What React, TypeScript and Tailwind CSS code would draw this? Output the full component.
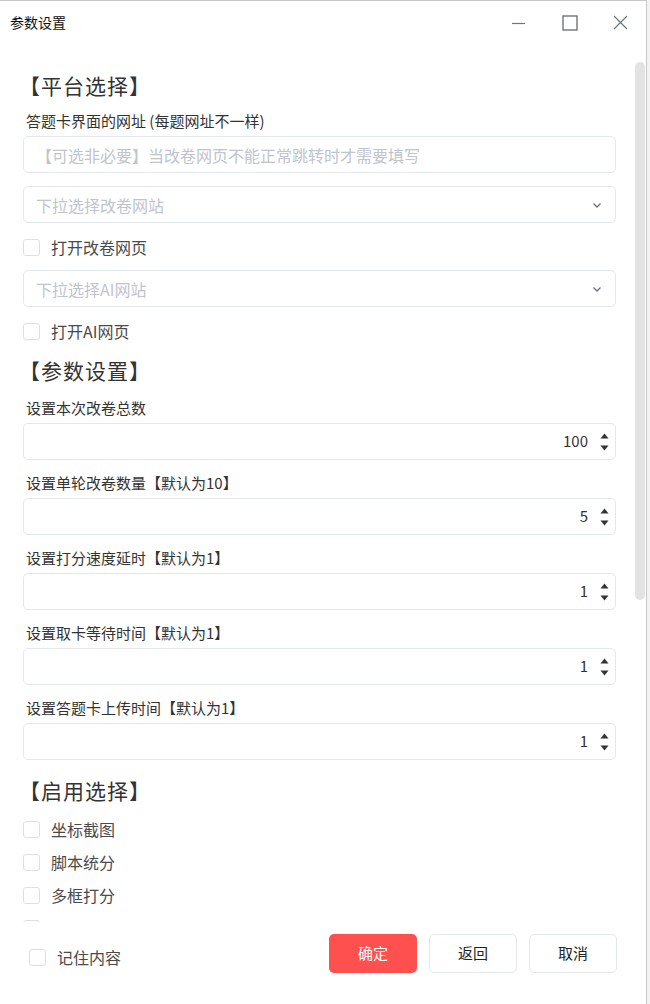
import React from 'react';

const FONT = '"Noto Sans CJK SC", "Noto Sans", sans-serif';

const Checkbox: React.FC<{ label?: string; className?: string }> = ({ label, className = '' }) => (
  <label className={`flex items-center h-[20px] shrink-0 ${className}`}>
    <span className="w-[17px] h-[17px] rounded-[3px] border border-[#dcdfe6] bg-white shrink-0"></span>
    {label && <span className="ml-[11px] text-[16px] text-[#4a4a4a] leading-[20px]">{label}</span>}
  </label>
);

const SectionTitle: React.FC<{ text: string; className?: string }> = ({ text, className = '' }) => (
  <div className={`-ml-[4px] shrink-0 text-[21px] tracking-[1px] leading-[28px] text-[#333] ${className}`}>{text}</div>
);

const FieldLabel: React.FC<{ text: string; className?: string }> = ({ text, className = '' }) => (
  <div className={`ml-[3px] shrink-0 text-[15px] leading-[20px] text-[#333] ${className}`}>{text}</div>
);

const Chevron = () => (
  <svg width="12" height="12" viewBox="0 0 12 12" fill="none" stroke="#6b6f76" strokeWidth="1.3">
    <path d="M2.5 4.5 L6 8 L9.5 4.5" />
  </svg>
);

const Select: React.FC<{ placeholder: string; className?: string }> = ({ placeholder, className = '' }) => (
  <div className={`h-[37px] shrink-0 rounded-[5px] border border-[#e4e7ed] bg-white flex items-center pl-[12px] pr-[12px] ${className}`}>
    <span className="flex-1 text-[16px] text-[#c0c4cc]">{placeholder}</span>
    <Chevron />
  </div>
);

const NumberInput: React.FC<{ value: number; className?: string }> = ({ value, className = '' }) => (
  <div className={`h-[37px] shrink-0 rounded-[5px] border border-[#e4e7ed] bg-white flex items-center pr-[5px] ${className}`}>
    <span className="flex-1 text-right text-[15px] text-[#333] pr-[10px]">{value}</span>
    <div className="flex flex-col items-center gap-[6px] w-[12px]">
      <svg width="9" height="6" viewBox="0 0 9 6"><path d="M0.5 5.5 L4.5 0.5 L8.5 5.5 Z" fill="#333" /></svg>
      <svg width="9" height="6" viewBox="0 0 9 6"><path d="M0.5 0.5 L4.5 5.5 L8.5 0.5 Z" fill="#333" /></svg>
    </div>
  </div>
);

const numberFields = [
  { label: '设置本次改卷总数', value: 100 },
  { label: '设置单轮改卷数量【默认为10】', value: 5 },
  { label: '设置打分速度延时【默认为1】', value: 1 },
  { label: '设置取卡等待时间【默认为1】', value: 1 },
  { label: '设置答题卡上传时间【默认为1】', value: 1 },
];

const enableOptions = ['坐标截图', '脚本统分', '多框打分'];

export default function App() {
  return (
    <div className="w-[650px] h-[1004px] bg-[#f3f3f3] overflow-hidden" style={{ fontFamily: FONT }}>
      <div className="w-[647px] h-[1004px] bg-white border-t border-r border-[#c8c8c8] flex flex-col">
        {/* title bar */}
        <div className="h-[43px] flex items-center shrink-0">
          <span className="ml-[10px] text-[14px] text-[#111] flex-1">参数设置</span>
          <div className="flex items-center">
            <svg width="14" height="14" viewBox="0 0 14 14" className="mr-[36px]">
              <path d="M0 7.5 H13" stroke="#6e7480" strokeWidth="1.2" />
            </svg>
            <svg width="16" height="16" viewBox="0 0 16 16" className="mr-[35px]">
              <rect x="1" y="1" width="14" height="14" fill="none" stroke="#6e7480" strokeWidth="1.4" />
            </svg>
            <svg width="15" height="15" viewBox="0 0 15 15" className="mr-[18px]">
              <path d="M1 1 L14 14 M14 1 L1 14" stroke="#6e7480" strokeWidth="1.2" />
            </svg>
          </div>
        </div>

        {/* scroll area */}
        <div className="flex-1 flex overflow-hidden">
          <div className="flex-1 pl-[23px] pr-[19px] flex flex-col overflow-hidden">
            <SectionTitle text="【平台选择】" className="mt-[27px]" />
            <FieldLabel text="答题卡界面的网址 (每题网址不一样)" className="mt-[12px]" />
            <div className="mt-[5px] h-[37px] shrink-0 rounded-[5px] border border-[#e4e7ed] bg-white flex items-center pl-[12px]">
              <span className="text-[16px] text-[#c0c4cc]">【可选非必要】当改卷网页不能正常跳转时才需要填写</span>
            </div>
            <Select placeholder="下拉选择改卷网站" className="mt-[13px]" />
            <Checkbox label="打开改卷网页" className="mt-[14px]" />
            <Select placeholder="下拉选择AI网站" className="mt-[13px]" />
            <Checkbox label="打开AI网页" className="mt-[14px]" />

            <SectionTitle text="【参数设置】" className="mt-[15px]" />
            {numberFields.map((f, i) => (
              <div key={i} className="flex flex-col shrink-0">
                <FieldLabel text={f.label} className={i === 0 ? 'mt-[14px]' : 'mt-[13px]'} />
                <NumberInput value={f.value} className="mt-[5px]" />
              </div>
            ))}

            <SectionTitle text="【启用选择】" className="mt-[16px]" />
            <div className="flex flex-col shrink-0 gap-[13px] mt-[15px]">
              {enableOptions.map((o) => (
                <Checkbox key={o} label={o} />
              ))}
              <Checkbox />
            </div>
          </div>
          <div className="w-[10px] mr-[1px] flex flex-col">
            <div className="mt-[18px] h-[538px] rounded-full bg-[#e3e3e3]"></div>
          </div>
        </div>

        {/* footer */}
        <div className="h-[82px] shrink-0 flex items-start pl-[29px] pr-[29px]">
          <Checkbox label="记住内容" className="mt-[25px] flex-1" />
          <div className="flex gap-[12px] mt-[12px]">
            <button className="w-[88px] h-[39px] rounded-[5px] bg-[#ff5050] text-white text-[15px]">确定</button>
            <button className="w-[88px] h-[39px] rounded-[5px] bg-white border border-[#e4e7ed] text-[#222] text-[15px]">返回</button>
            <button className="w-[88px] h-[39px] rounded-[5px] bg-white border border-[#e4e7ed] text-[#222] text-[15px]">取消</button>
          </div>
        </div>
      </div>
    </div>
  );
}
